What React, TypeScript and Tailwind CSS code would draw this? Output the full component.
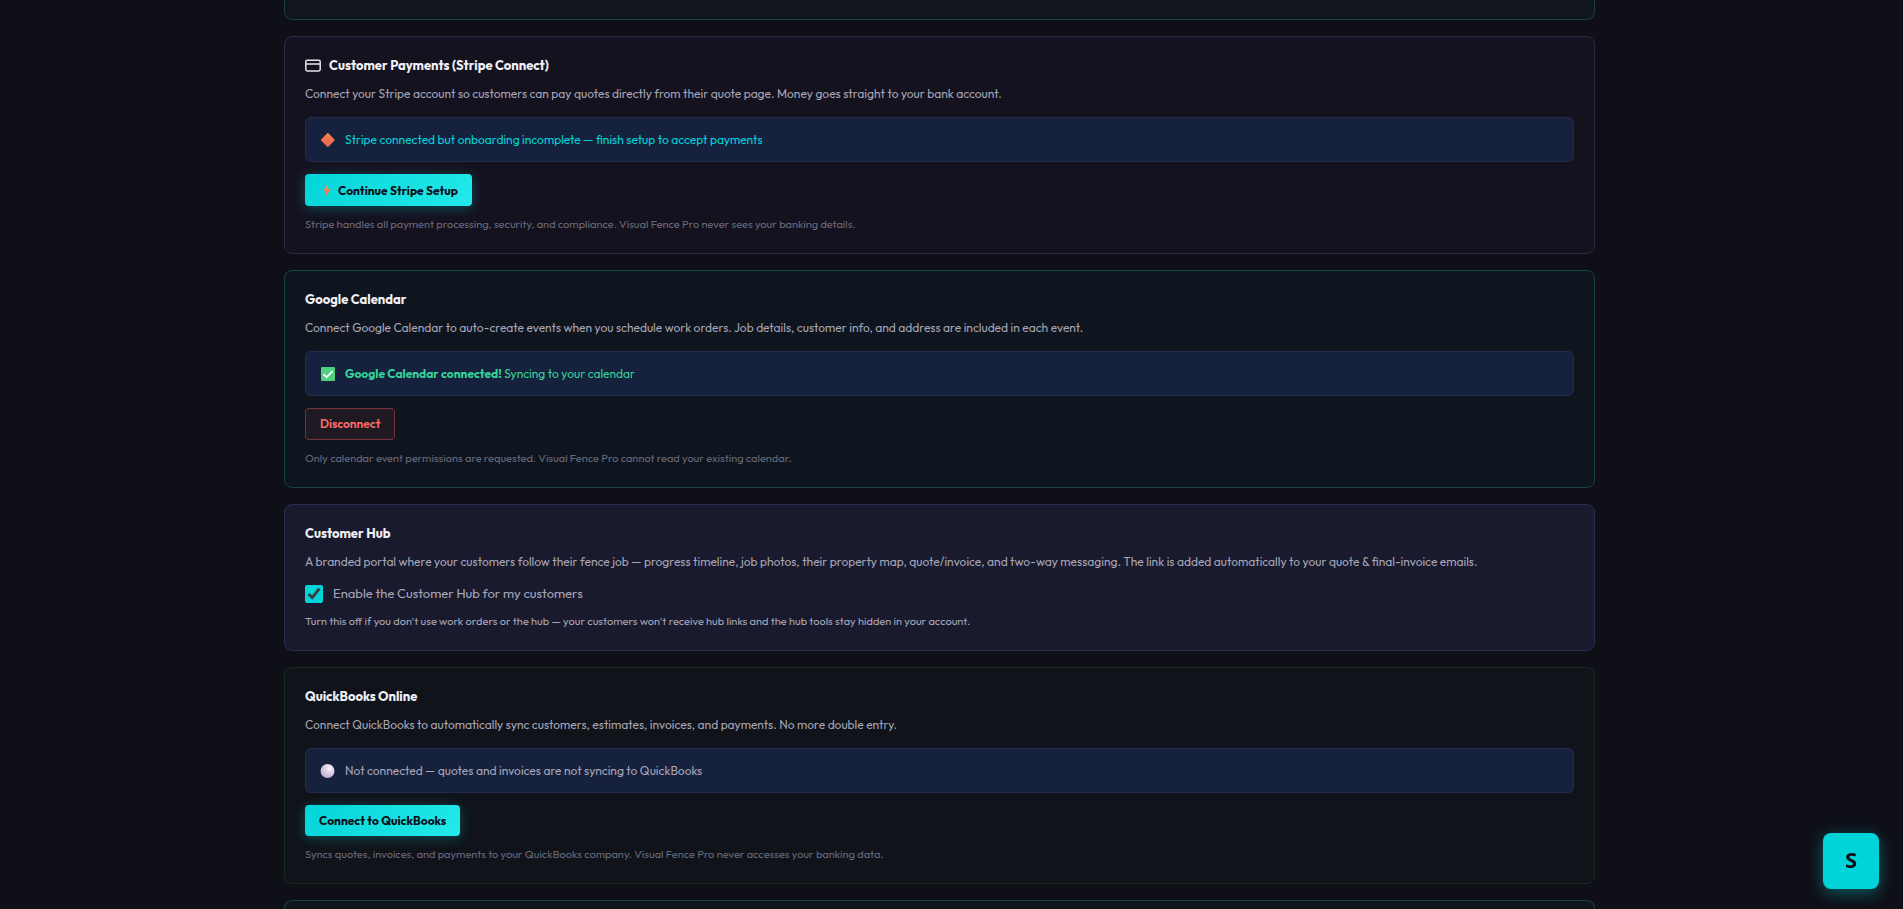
import { useState } from "react";
import type { ReactNode } from "react";

const Card = ({ className, children }: { className: string; children: ReactNode }) => (
  <section className={`rounded-lg border px-5 pt-[21px] pb-[19px] ${className}`}>{children}</section>
);

const Title = ({ children }: { children: ReactNode }) => (
  <h3 className="flex h-4 items-center gap-2 text-[13px] font-bold text-[#f0f0f6]">{children}</h3>
);

const Description = ({ children }: { children: ReactNode }) => (
  <p className="mt-[10px] text-[12px] leading-5 text-[#a6a6b6]">{children}</p>
);

const Note = ({ className = "text-[#68697a]", children }: { className?: string; children: ReactNode }) => (
  <p className={`mt-2 text-[11px] leading-5 ${className}`}>{children}</p>
);

const Status = ({ icon, className, children }: { icon: ReactNode; className: string; children: ReactNode }) => (
  <div
    className={`mt-[13px] flex h-[45px] items-center gap-[9px] rounded-md border border-[#242c4d] bg-[#16213e] px-[14px] text-[12px] ${className}`}
  >
    {icon}
    <span>{children}</span>
  </div>
);

const primaryButton =
  "mt-3 flex items-center gap-[3px] rounded-sm bg-linear-135 from-[#00d4d8] to-[#22eaea] px-[14px] py-[6px] text-[12px] leading-[19px] font-bold text-[#0d0d17] shadow-[0_2px_12px_rgba(0,212,216,0.3)]";

const CreditCardIcon = () => (
  <svg width="16" height="16" viewBox="0 0 16 16" fill="none" stroke="#e4e4ec" strokeWidth="1.5">
    <rect x="0.8" y="2.2" width="14.4" height="10.8" rx="1.4" />
    <path d="M0.8 6h14.4" />
  </svg>
);

const DiamondIcon = () => (
  <svg width="16" height="16" viewBox="0 0 16 16">
    <defs>
      <linearGradient id="diamond" x1="0" y1="0" x2="0" y2="1">
        <stop offset="0" stopColor="#f5854c" />
        <stop offset="1" stopColor="#ee5d54" />
      </linearGradient>
    </defs>
    <path
      d="M7.2 1.2a.9.9 0 0 1 1.2 0l6.1 6.2a.9.9 0 0 1 0 1.2l-6.1 6.2a.9.9 0 0 1-1.2 0L1.1 8.6a.9.9 0 0 1 0-1.2z"
      fill="url(#diamond)"
    />
  </svg>
);

const BoltIcon = () => (
  <svg width="16" height="16" viewBox="0 0 16 16" className="my-[2px]">
    <defs>
      <linearGradient id="bolt" x1="0" y1="0" x2="0" y2="1">
        <stop offset="0" stopColor="#f9a04b" />
        <stop offset="1" stopColor="#f0655a" />
      </linearGradient>
    </defs>
    <path d="M9.2 1.6 4 9h3.2L6.6 14.6l5.2-7.8H8.6z" fill="url(#bolt)" />
  </svg>
);

const CheckIcon = () => (
  <svg width="16" height="16" viewBox="0 0 16 16">
    <rect x="1" y="1" width="14" height="14" rx="1" fill="#4fd080" />
    <path d="M3.4 8.2 6.6 11.2l6-6" fill="none" stroke="#fff" strokeWidth="1.7" />
  </svg>
);

const CircleIcon = () => (
  <svg width="16" height="16" viewBox="0 0 16 16">
    <defs>
      <radialGradient id="circle" cx="0.65" cy="0.3" r="0.8">
        <stop offset="0" stopColor="#f8f4fa" />
        <stop offset="1" stopColor="#bda5cf" />
      </radialGradient>
    </defs>
    <circle cx="7.5" cy="8" r="7" fill="url(#circle)" />
  </svg>
);

const App = () => {
  const [hubEnabled, setHubEnabled] = useState(true);

  return (
    <div className="h-screen overflow-hidden bg-[#0f0f17] pr-6 font-['Outfit','Lato',sans-serif]">
      <main className="mx-auto flex max-w-[1311px] flex-col gap-4">
        <div className="h-5 rounded-b-lg border border-t-0 border-[#18403c] bg-[#10161c]" />

        {/* STRIPE */}
        <Card className="border-[#2c2846] bg-[#14121f]">
          <Title>
            <CreditCardIcon />
            Customer Payments (Stripe Connect)
          </Title>
          <Description>
            Connect your Stripe account so customers can pay quotes directly from their quote page. Money goes straight to your bank account.
          </Description>
          <Status icon={<DiamondIcon />} className="text-[#00d4d8]">
            Stripe connected but onboarding incomplete — finish setup to accept payments
          </Status>
          <button type="button" className={primaryButton}>
            <BoltIcon />
            Continue Stripe Setup
          </button>
          <Note>Stripe handles all payment processing, security, and compliance. Visual Fence Pro never sees your banking details.</Note>
        </Card>

        {/* GOOGLE CALENDAR */}
        <Card className="border-[#18443f] bg-[#0f151e]">
          <Title>Google Calendar</Title>
          <Description>
            Connect Google Calendar to auto-create events when you schedule work orders. Job details, customer info, and address are included in each event.
          </Description>
          <Status icon={<CheckIcon />} className="text-[#34d399]">
            <strong className="font-bold">Google Calendar connected!</strong> Syncing to your calendar
          </Status>
          <button
            type="button"
            className="mt-3 flex h-8 items-center rounded-sm border border-[#7a3238] bg-[#1f1a22] px-[14px] text-[12px] font-semibold text-[#ff6b6b]"
          >
            Disconnect
          </button>
          <Note>Only calendar event permissions are requested. Visual Fence Pro cannot read your existing calendar.</Note>
        </Card>

        {/* CUSTOMER HUB */}
        <Card className="border-[#272d4f] bg-[#1a1a2e]">
          <Title>Customer Hub</Title>
          <Description>
            A branded portal where your customers follow their fence job — progress timeline, job photos, their property map, quote/invoice, and two-way messaging. The link is added automatically to your quote &amp; final-invoice emails.
          </Description>
          <label className="mt-[13px] flex h-[18px] items-center gap-[10px] text-[13px] text-[#a6a6b6]">
            <input
              type="checkbox"
              className="size-[18px] accent-[#00d4d8]"
              checked={hubEnabled}
              onChange={(e) => setHubEnabled(e.target.checked)}
            />
            Enable the Customer Hub for my customers
          </label>
          <Note className="text-[#a6a6b6]">
            Turn this off if you don't use work orders or the hub — your customers won't receive hub links and the hub tools stay hidden in your account.
          </Note>
        </Card>

        {/* QUICKBOOKS */}
        <Card className="border-[#172c1e] bg-[#10131a]">
          <Title>QuickBooks Online</Title>
          <Description>
            Connect QuickBooks to automatically sync customers, estimates, invoices, and payments. No more double entry.
          </Description>
          <Status icon={<CircleIcon />} className="text-[#a6a6b6]">
            Not connected — quotes and invoices are not syncing to QuickBooks
          </Status>
          <button type="button" className={primaryButton}>
            Connect to QuickBooks
          </button>
          <Note>Syncs quotes, invoices, and payments to your QuickBooks company. Visual Fence Pro never accesses your banking data.</Note>
        </Card>

        <div className="h-10 rounded-t-lg border border-b-0 border-[#18403c] bg-[#10161c]" />
      </main>

      <button
        type="button"
        className="fixed right-6 bottom-5 size-14 rounded-lg bg-[#00d4d8] pb-1 font-['Noto_Sans',sans-serif] text-[22px] font-bold text-[#0d0d17] shadow-[0_4px_16px_rgba(0,212,216,0.4)]"
      >
        S
      </button>
    </div>
  );
};

export default App;
